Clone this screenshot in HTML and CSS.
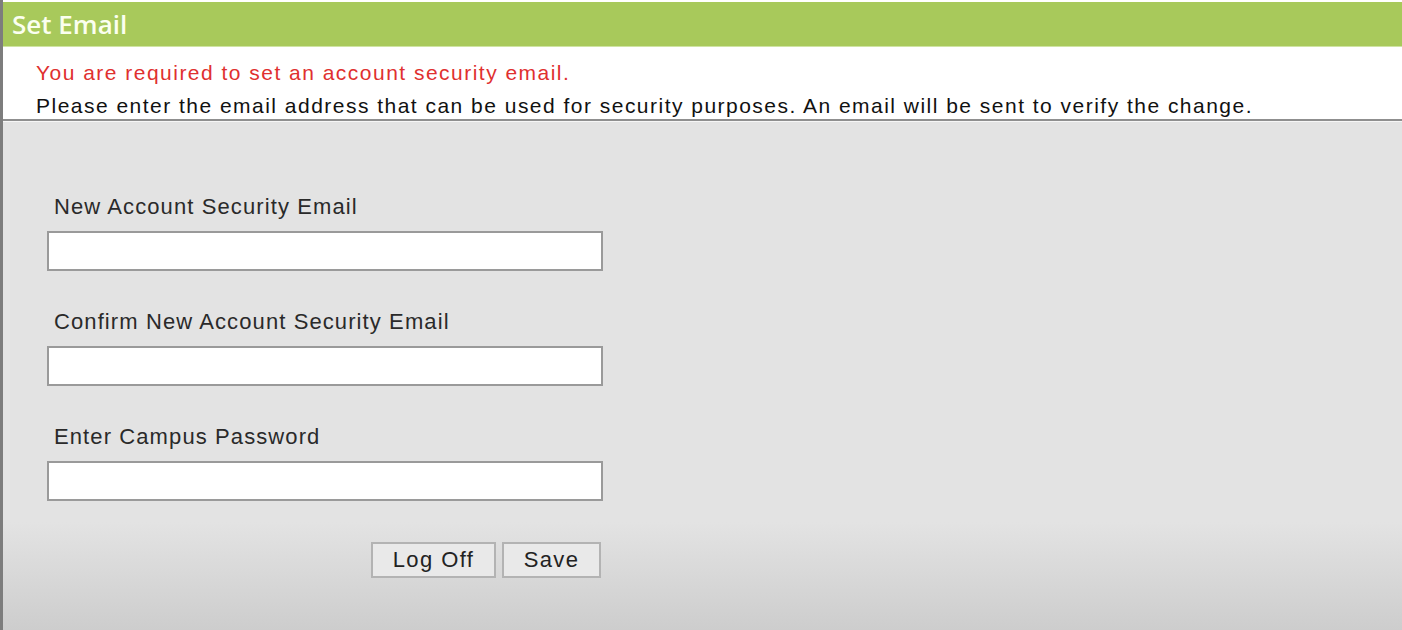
FILE: index.html
```html
<!DOCTYPE html>
<html>
<head>
<meta charset="utf-8">
<link rel="stylesheet" href="styles.css">
<title>Set Email</title>
</head>
<body>
<div class="window">
  <div class="header">Set Email</div>
  <div class="intro">
    <p class="warning">You are required to set an account security email.</p>
    <p class="info">Please enter the email address that can be used for security purposes. An email will be sent to verify the change.</p>
  </div>
  <div class="form">
    <div class="form-inner">
      <div class="field">
        <label class="label">New Account Security Email</label>
        <input class="input" type="text">
      </div>
      <div class="field">
        <label class="label">Confirm New Account Security Email</label>
        <input class="input" type="text">
      </div>
      <div class="field">
        <label class="label">Enter Campus Password</label>
        <input class="input" type="password">
      </div>
      <div class="actions">
        <button class="btn btn-logoff" type="button">Log Off</button>
        <button class="btn btn-save" type="button">Save</button>
      </div>
    </div>
  </div>
</div>
</body>
</html>
```
FILE: styles.css
```css
html, body {
  margin: 0;
  padding: 0;
  background: #ffffff;
}
body {
  font-family: "Liberation Sans", Arial, sans-serif;
  width: 1402px;
  height: 630px;
  overflow: hidden;
}
.window {
  display: flex;
  flex-direction: column;
  height: 630px;
  border-left: 3px solid #7d7d7d;
  box-sizing: border-box;
  padding-top: 2px;
}
.header {
  height: 45px;
  box-sizing: border-box;
  background: #a8c95b;
  border-bottom: 1px solid #cfe4a3;
  color: #fbfff0;
  font-family: "Open Sans", "Liberation Sans", sans-serif;
  font-weight: 600;
  font-size: 26px;
  line-height: 44px;
  padding-left: 9px;
}
.intro {
  background: #ffffff;
  padding: 9px 0 0 33px;
  height: 74px;
  box-sizing: border-box;
  border-bottom: 2px solid #8f8f8f;
}
.intro p {
  margin: 0;
  font-size: 21px;
  line-height: 33px;
  letter-spacing: 1.48px;
}
.warning {
  color: #e0302f;
}
.info {
  color: #111111;
}
.form {
  flex: 1;
  border-top: 1px solid #f6f6f6;
  background: linear-gradient(to bottom, #e3e3e3 0, #e3e3e3 400px, #cdcdcd 100%);
  padding: 72px 0 0 44px;
}
.form-inner {
  display: flex;
  flex-direction: column;
  width: 556px;
}
.field {
  display: flex;
  flex-direction: column;
  margin-bottom: 38px;
}
.label {
  font-size: 22px;
  line-height: 26px;
  color: #2a2a2a;
  letter-spacing: 1.1px;
  padding-left: 7px;
  margin-bottom: 11px;
}
.input {
  width: 556px;
  height: 40px;
  box-sizing: border-box;
  border: 2px solid #9a9a9a;
  background: #ffffff;
  margin: 0;
  padding: 0 6px;
  outline: none;
}
.actions {
  display: flex;
  justify-content: flex-end;
  gap: 6px;
  margin-top: 3px;
  padding-right: 2px;
}
.btn {
  height: 36px;
  box-sizing: border-box;
  border: 2px solid #b3b3b3;
  background: #e9e9e9;
  font-family: "Liberation Sans", Arial, sans-serif;
  font-size: 22px;
  color: #222222;
  letter-spacing: 1.4px;
  padding: 0;
  margin: 0;
}
.btn-logoff {
  width: 125px;
}
.btn-save {
  width: 99px;
}
```
